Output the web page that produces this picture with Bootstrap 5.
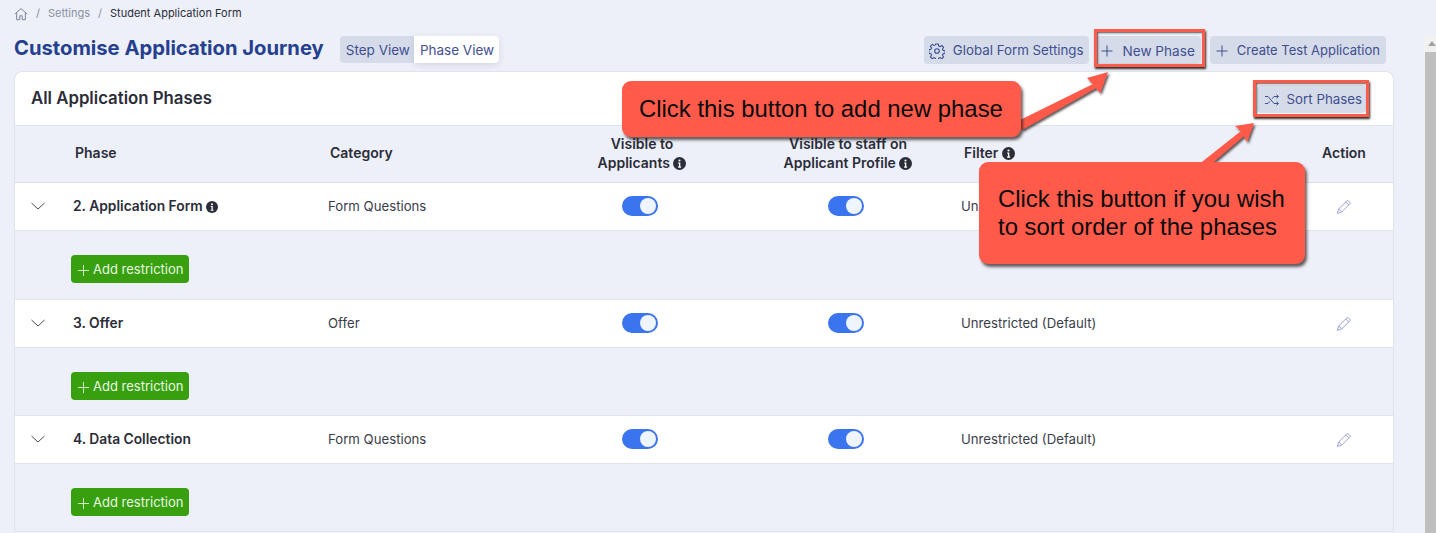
<!DOCTYPE html>
<html lang="en">
<head>
<meta charset="utf-8">
<title>Customise Application Journey</title>
<link href="https://cdn.jsdelivr.net/npm/bootstrap@5.3.0/dist/css/bootstrap.min.css" rel="stylesheet">
<style>
html,body{height:533px;overflow:hidden}
body{background:#edf0f8;font-family:Inter,"Liberation Sans",sans-serif;color:#3a3d4a;font-size:13.2px;position:relative}
.app-main{width:1394px;padding-left:14px}
.crumbs{height:27px;font-size:11px;color:#8a90a3;gap:8px}
.crumbs .cur{color:#2b2d38;padding-left:0}
.page-head{height:44px}
.page-title{font-size:20.2px;font-weight:700;color:#25408f;margin:0 16px 2px 0;line-height:42px}
.view-switch{background:#d5dbe8;border-radius:4px;height:27px;font-size:13.5px;color:#3f4f91;line-height:28px}
.view-switch span{padding:0 4px 0 6px;display:block}
.view-switch .on{background:#fff;border-radius:0 4px 4px 0;box-shadow:0 2px 6px rgba(60,70,110,.15);padding:0 5px 0 6px}
.soft-btn{background:#d5dbe8;color:#3f4f91;border:0;border-radius:4px;height:28px;font-size:13.3px;padding:2px 6px 0 5px;display:flex;align-items:center;gap:8px;white-space:nowrap}
.soft-btn svg{display:block;flex:none}
.head-btns{gap:6px;margin-right:8px;margin-top:2px}
.new-btn{font-size:13.6px}
.test-btn{font-size:13px;margin-left:3px}
.sort-btn{padding:2px 4px 0 7px;gap:7px}
.panel{background:#fff;border:1px solid #dfe3ec;border-radius:8px 8px 0 0;border-bottom:0;overflow:hidden}
.panel-top{height:53px;padding:0 27px 0 16px}
.panel-title{font-size:16.8px;font-weight:600;color:#2b2d38;margin:0}
.phase-table{margin:0;table-layout:fixed;width:1378px;--bs-table-bg:transparent;font-size:13.2px;color:#3a3d4a}
.phase-table th,.phase-table td{padding:0;vertical-align:middle;border-bottom:1px solid #dfe3ec;border-top:0}
.phase-table thead tr{height:57px;background:#edf0f8;border-top:1px solid #dfe3ec}
.phase-table thead th{font-weight:600;font-size:14px;line-height:19px;color:#2b2d38;border-bottom:1px solid #dcdfe8;padding-bottom:3px}
.main-row{height:48px;background:#fff}
.sub-row{height:68px;background:#edf0f8}
.phase-table .sub-row td{vertical-align:top;padding-top:24px}
.phase-table .sub-first{height:69px}
.phase-table td.phase-name{font-weight:600;font-size:13.8px;color:#2b2d38}
.info-dot{display:inline-block;vertical-align:-2px}
.phase-table th.th-phase,.phase-table th.th-cat{padding-left:2px}
.phase-table th.th-vis{padding-left:4px}
.phase-table th.th-staff{padding-left:10px}
.phase-table td.td-staff{padding-left:6px}
.phase-table th.th-filter{padding-left:3px}
.phase-table th.th-act,.phase-table td.td-act{padding-left:4px}
.chev-ico{display:block;margin:0 0 1px 15px}
.green-btn{background:#38a00f;color:#e9f7e2;border:0;border-radius:4px;height:28px;width:118px;font-size:13px;padding:2px 6px 0;display:flex;align-items:center;gap:3px;white-space:nowrap;margin-left:-2px}
.green-btn svg{flex:none}
.tog{display:block;margin:0 auto 2px;width:36px;height:20px;border-radius:10px;background:#3a74ee;position:relative}
.tog::after{content:"";position:absolute;right:2px;top:2px;width:16px;height:16px;border-radius:50%;background:#eef5fe}
.callout{position:absolute;background:#ff5a4a;color:#0a0a0a;font-family:"Liberation Sans",Arial,sans-serif;border-radius:9px;box-shadow:2px 3px 3px rgba(40,30,30,.7);z-index:3;font-size:23.9px;line-height:28px}
.call-one{left:622px;top:81px;width:399px;height:56px;padding:14px 17px}
.call-two{left:979px;top:162px;width:326px;height:102px;padding:23px 19px}
.mark-box{position:absolute;border:3px solid #ff5a4a;box-shadow:1px 2px 2px rgba(30,20,20,.9),inset 1px 1px 2px rgba(30,20,20,.7);z-index:2;pointer-events:none}
.box-new{left:1094px;top:29px;width:111px;height:38px}
.box-sort{left:1253px;top:80px;width:116px;height:37px}
.arrows{position:absolute;left:0;top:0;z-index:1;pointer-events:none}
.sbar{position:absolute;left:1424px;top:35px;width:12px;height:498px;background:#f1f1f1}
.sbar-thumb{position:absolute;left:1px;top:17px;width:11px;height:481px;background:#bfbfbf}
.sbar-up{position:absolute;left:4px;top:6px;width:0;height:0;border:4px solid transparent;border-top:0;border-bottom:5px solid #a3a3a3}
.c-a{width:58px}.c-b{width:255px}.c-c{width:227px}.c-d{width:170px}.c-e{width:236px}.c-f{width:330px}.c-g{width:102px}
</style>
</head>
<body>
<div class="app-main">
  <div class="crumbs d-flex align-items-center">
    <svg width="14" height="14" viewBox="0 0 16 16" fill="none" stroke="#77809a" stroke-width="1.1"><path d="M1 8 8 1.800 15 8M3 6.600V14.500h3.600V10h2.800v4.500H13V6.600"/></svg>
    <span>/</span><span>Settings</span><span>/</span><span class="cur">Student Application Form</span>
  </div>
  <div class="page-head d-flex align-items-center">
    <h1 class="page-title">Customise Application Journey</h1>
    <div class="view-switch d-flex"><span>Step View</span><span class="on">Phase View</span></div>
    <div class="head-btns d-flex ms-auto">
      <button class="soft-btn"><svg width="16" height="16" viewBox="0 0 16 16" fill="none" stroke="#3f4f91" stroke-width="1.1"><circle cx="8" cy="8" r="2.300"/><path d="M6.700 1h2.600l.4 2 1.400.6 1.700-1.100 1.800 1.800-1.100 1.700.6 1.400 2 .4v2.600l-2 .4-.6 1.400 1.100 1.700-1.800 1.800-1.700-1.100-1.400.6-.4 2H6.700l-.4-2-1.400-.6-1.700 1.100-1.800-1.800 1.100-1.700-.6-1.400-2-.4V6.700l2-.4.6-1.400-1.100-1.700 1.800-1.800 1.700 1.100 1.400-.6z"/></svg>Global Form Settings</button>
      <button class="soft-btn new-btn"><svg width="14" height="14" viewBox="0 0 14 14" stroke="#3f4f91" stroke-width="1"><path d="M7 1.500v11M1.500 7h11"/></svg>New Phase</button>
      <button class="soft-btn test-btn"><svg width="14" height="14" viewBox="0 0 14 14" stroke="#3f4f91" stroke-width="1"><path d="M7 1.500v11M1.500 7h11"/></svg>Create Test Application</button>
    </div>
  </div>
  <div class="panel">
    <div class="panel-top d-flex align-items-center justify-content-between">
      <h2 class="panel-title">All Application Phases</h2>
      <button class="soft-btn sort-btn"><svg width="16" height="14" viewBox="0 0 16 14" fill="none" stroke="#3f4f91" stroke-width="1"><path d="M1 3.500h3l6 7h4M1 10.500h3l1.800-2.100M8.200 5.600 10 3.500h4M12.500 1.800 14.500 3.500l-2 1.700M12.500 8.800l2 1.700-2 1.700"/></svg>Sort Phases</button>
    </div>
    <table class="table phase-table">
      <colgroup><col class="c-a"><col class="c-b"><col class="c-c"><col class="c-d"><col class="c-e"><col class="c-f"><col class="c-g"></colgroup>
      <thead><tr>
        <th></th><th class="th-phase">Phase</th><th class="th-cat">Category</th>
        <th class="text-center th-vis">Visible to<br>Applicants <svg class="info-dot" width="13" height="13" viewBox="0 0 16 16"><use href="#ii"/></svg></th>
        <th class="text-center th-staff">Visible to staff on<br>Applicant Profile <svg class="info-dot" width="13" height="13" viewBox="0 0 16 16"><use href="#ii"/></svg></th>
        <th class="th-filter">Filter <svg class="info-dot" width="13" height="13" viewBox="0 0 16 16"><use href="#ii"/></svg></th>
        <th class="text-center th-act">Action</th>
      </tr></thead>
      <tbody>
        <tr class="main-row"><td><svg class="chev-ico" width="16" height="10" viewBox="0 0 16 10" fill="none" stroke="#4a4d5a" stroke-width="1"><path d="M1.500 2 8 8l6.500-6"/></svg></td><td class="phase-name">2. Application Form <svg class="info-dot" width="12" height="12" viewBox="0 0 16 16"><use href="#ii"/></svg></td><td>Form Questions</td><td><span class="tog"></span></td><td class="td-staff"><span class="tog"></span></td><td>Unrestricted (Default)</td><td class="text-center td-act"><svg width="16" height="16" viewBox="0 0 16 16"><use href="#pen"/></svg></td></tr>
        <tr class="sub-row sub-first"><td></td><td colspan="6"><button class="green-btn"><svg width="13" height="13" viewBox="0 0 14 14" stroke="#d9f0cf" stroke-width="1"><path d="M7 1v12M1 7h12"/></svg>Add restriction</button></td></tr>
        <tr class="main-row"><td><svg class="chev-ico" width="16" height="10" viewBox="0 0 16 10" fill="none" stroke="#4a4d5a" stroke-width="1"><path d="M1.500 2 8 8l6.500-6"/></svg></td><td class="phase-name">3. Offer</td><td>Offer</td><td><span class="tog"></span></td><td class="td-staff"><span class="tog"></span></td><td>Unrestricted (Default)</td><td class="text-center td-act"><svg width="16" height="16" viewBox="0 0 16 16"><use href="#pen"/></svg></td></tr>
        <tr class="sub-row"><td></td><td colspan="6"><button class="green-btn"><svg width="13" height="13" viewBox="0 0 14 14" stroke="#d9f0cf" stroke-width="1"><path d="M7 1v12M1 7h12"/></svg>Add restriction</button></td></tr>
        <tr class="main-row"><td><svg class="chev-ico" width="16" height="10" viewBox="0 0 16 10" fill="none" stroke="#4a4d5a" stroke-width="1"><path d="M1.500 2 8 8l6.500-6"/></svg></td><td class="phase-name">4. Data Collection</td><td>Form Questions</td><td><span class="tog"></span></td><td class="td-staff"><span class="tog"></span></td><td>Unrestricted (Default)</td><td class="text-center td-act"><svg width="16" height="16" viewBox="0 0 16 16"><use href="#pen"/></svg></td></tr>
        <tr class="sub-row"><td></td><td colspan="6"><button class="green-btn"><svg width="13" height="13" viewBox="0 0 14 14" stroke="#d9f0cf" stroke-width="1"><path d="M7 1v12M1 7h12"/></svg>Add restriction</button></td></tr>
      </tbody>
    </table>
  </div>
</div>
<svg width="0" height="0" class="position-absolute">
  <symbol id="ii" viewBox="0 0 16 16"><circle cx="8" cy="8" r="8" fill="#2b2d38"/><circle cx="8" cy="4.300" r="1.300" fill="#fff"/><path d="M6.300 6.800h2.700v5h1v1.300H6.200v-1.300h1.100V8.100h-1z" fill="#fff"/></symbol>
  <symbol id="pen" viewBox="0 0 16 16"><path d="M11.500 1.200l3 3-8.800 8.800-4.400 1.400 1.400-4.400zM9.800 3l3 3M2.800 10l3 3" fill="none" stroke="#98a4d8" stroke-width="1"/></symbol>
</svg>
<svg class="arrows" width="1436" height="533" viewBox="0 0 1436 533">
  <defs><filter id="sh" x="-20%" y="-20%" width="140%" height="140%"><feDropShadow dx="1.500" dy="2" stdDeviation="1" flood-color="#2a1f1f" flood-opacity=".75"/></filter></defs>
  <path filter="url(#sh)" fill="#ff5a4a" d="M1016 122 1093 84 1087 78 1108 72 1100 93 1096 88 1022 130z"/>
  <path filter="url(#sh)" fill="#ff5a4a" d="M1198 165 1241 131 1235 126 1254 123 1247 142 1244 136 1210 165z"/>
</svg>
<div class="mark-box box-new"></div>
<div class="mark-box box-sort"></div>
<div class="callout call-one">Click this button to add new phase</div>
<div class="callout call-two">Click this button if you wish<br>to sort order of the phases</div>
<div class="sbar"><div class="sbar-up"></div><div class="sbar-thumb"></div></div>
</body>
</html>
